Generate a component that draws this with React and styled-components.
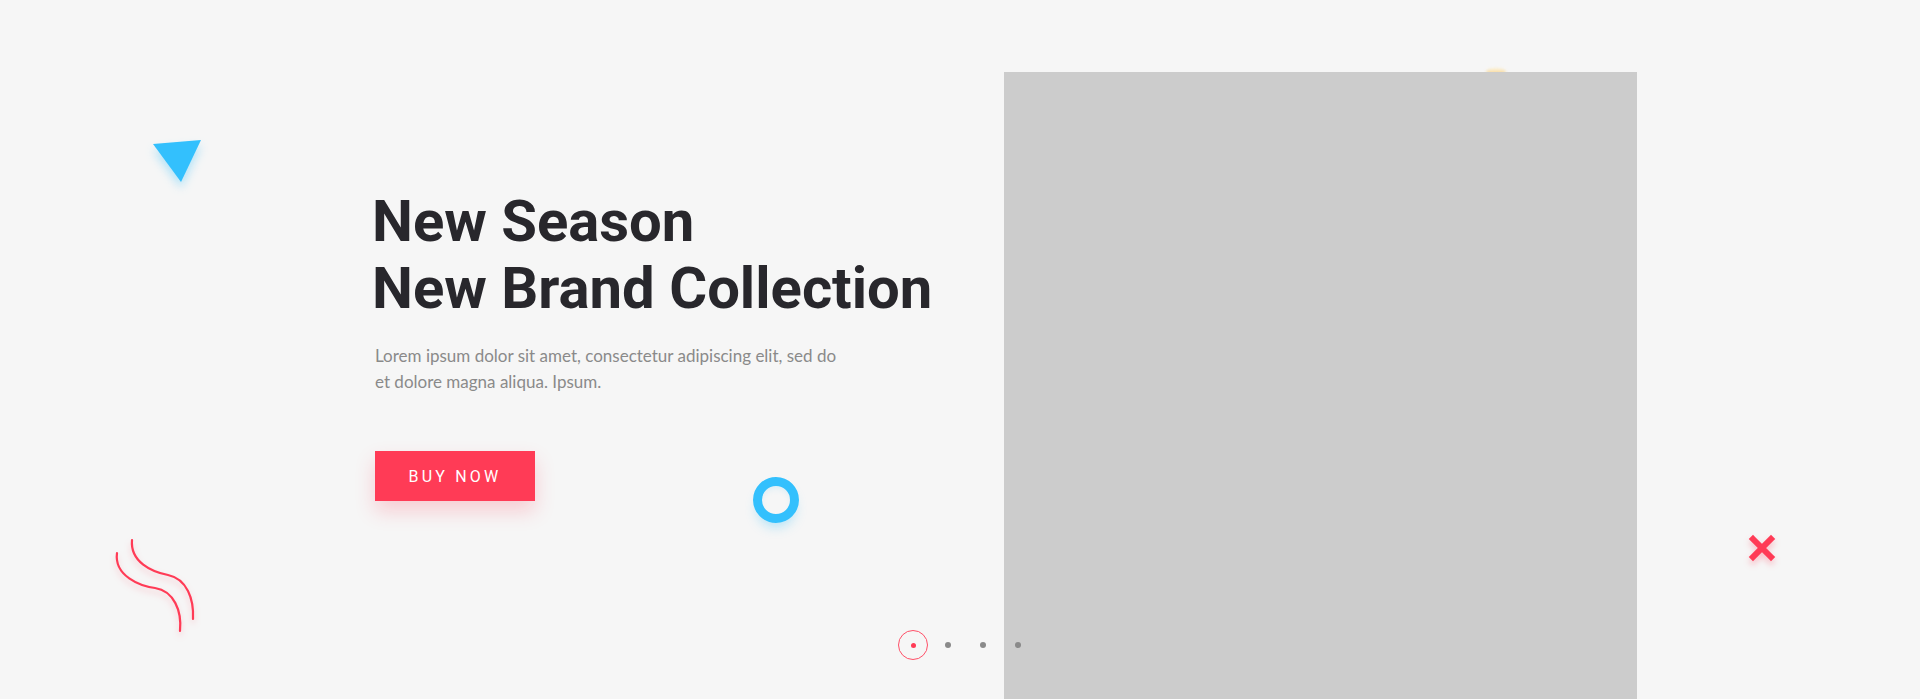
import React from "react";
import styled, { createGlobalStyle } from "styled-components";

const GlobalStyle = createGlobalStyle`
  html, body {
    margin: 0;
    padding: 0;
    background: #f6f6f6;
  }
  * {
    box-sizing: border-box;
  }
`;

const Hero = styled.section`
  position: relative;
  display: flex;
  height: 699px;
  overflow: hidden;
  background: #f6f6f6;
  padding-left: 372px;
`;

const TextColumn = styled.div`
  position: relative;
  z-index: 2;
  width: 632px;
  padding-top: 188px;
`;

const Heading = styled.h1`
  margin: 0;
  font-family: Roboto, "Liberation Sans", sans-serif;
  font-weight: 700;
  font-size: 58px;
  line-height: 67px;
  color: #28272c;
`;

const Lead = styled.p`
  margin: 21px 0 0 3px;
  width: 475px;
  font-family: Lato, "Noto Sans", sans-serif;
  font-size: 17px;
  line-height: 26px;
  color: #8a8a8a;
`;

const BuyButton = styled.button`
  margin: 56px 0 0 3px;
  width: 160px;
  height: 50px;
  border: 0;
  background: #ff3b56;
  color: #fff;
  font-family: Roboto, "Liberation Sans", sans-serif;
  font-size: 16px;
  letter-spacing: 3.2px;
  text-transform: uppercase;
  box-shadow: 0 10px 20px rgba(255, 59, 86, 0.22);
  cursor: pointer;
`;

const ImageColumn = styled.div`
  position: relative;
  z-index: 1;
  margin-top: 72px;
  width: 633px;
  height: 700px;
  background: #cccccc;
`;

const Shape = styled.div`
  position: absolute;
  left: ${(p) => p.$x}px;
  top: ${(p) => p.$y}px;
  z-index: ${(p) => p.$z ?? 3};
  line-height: 0;
`;

const Ring = styled.div`
  width: 46px;
  height: 46px;
  border-radius: 50%;
  border: 9px solid #33c0fd;
  box-shadow: 0 8px 12px -4px rgba(51, 192, 253, 0.35),
    inset 0 4px 6px -2px rgba(51, 192, 253, 0.15);
`;

const Glow = styled.div`
  width: 20px;
  height: 8px;
  border-radius: 50%;
  background: linear-gradient(#fff3d0, #f5b84a);
  filter: blur(1.5px);
  opacity: 0.7;
`;

const Dots = styled.div`
  position: absolute;
  left: 898px;
  top: 630px;
  z-index: 3;
  display: flex;
  align-items: center;
  gap: 5px;
`;

const Dot = styled.span`
  display: flex;
  align-items: center;
  justify-content: center;
  width: 30px;
  height: 30px;
  border-radius: 50%;
  border: ${(p) => (p.$active ? "1px solid #ff5068" : "0")};
  &::after {
    content: "";
    width: ${(p) => (p.$active ? 5 : 6)}px;
    height: ${(p) => (p.$active ? 5 : 6)}px;
    border-radius: 50%;
    background: ${(p) => (p.$active ? "#ff3b56" : "#8a8a8a")};
  }
`;

export default function App() {
  return (
    <>
      <GlobalStyle />
      <Hero>
        <TextColumn>
          <Heading>
            New Season
            <br />
            New Brand Collection
          </Heading>
          <Lead>
            Lorem ipsum dolor sit amet, consectetur adipiscing elit, sed do et
            dolore magna aliqua. Ipsum.
          </Lead>
          <BuyButton>Buy Now</BuyButton>
        </TextColumn>
        <ImageColumn />

        <Shape $x={150} $y={136}>
          <svg width="56" height="56" viewBox="0 0 56 56" style={{ filter: "drop-shadow(0 6px 5px rgba(51,192,253,0.35))" }}>
            <polygon points="3,8 51,4 31,46" fill="#33c0fd" />
          </svg>
        </Shape>

        <Shape $x={753} $y={477}>
          <Ring />
        </Shape>

        <Shape $x={110} $y={536}>
          <svg width="96" height="104" viewBox="0 0 96 104" style={{ filter: "drop-shadow(0 4px 3px rgba(255,59,86,0.25))" }}>
            <path d="M7 17 C 4 40, 30 50, 45 52 C 64 55, 72 75, 70 95" fill="none" stroke="#ff3b56" strokeWidth="2.2" strokeLinecap="round" />
            <path d="M22 4 C 20 26, 42 36, 58 39 C 77 43, 84 63, 83 83" fill="none" stroke="#ff3b56" strokeWidth="2.2" strokeLinecap="round" />
          </svg>
        </Shape>

        <Shape $x={1746} $y={532}>
          <svg width="32" height="32" viewBox="0 0 32 32" style={{ filter: "drop-shadow(0 4px 3px rgba(255,59,86,0.3))" }}>
            <path d="M7 7 L25 25 M25 7 L7 25" stroke="#ff3b56" strokeWidth="6" strokeLinecap="square" />
          </svg>
        </Shape>

        <Shape $x={1486} $y={68} $z={0}>
          <Glow />
        </Shape>

        <Dots>
          <Dot $active />
          <Dot />
          <Dot />
          <Dot />
        </Dots>
      </Hero>
    </>
  );
}
